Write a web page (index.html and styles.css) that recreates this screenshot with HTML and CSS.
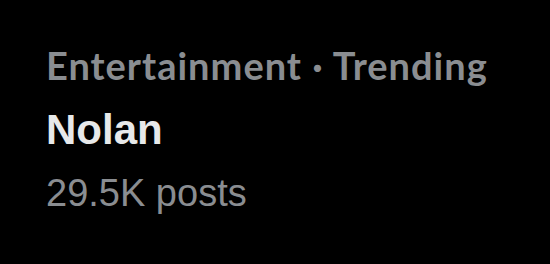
FILE: index.html
```html
<!DOCTYPE html>
<html>
<head>
	<title>Trend</title>
	<link rel="stylesheet" href="styles.css">
</head>
<body>
	<div class="trend">
		<div class="trend-meta">Entertainment · Trending</div>
		<div class="trend-name">Nolan</div>
		<div class="trend-count">29.5K posts</div>
	</div>
</body>
</html>
```

FILE: styles.css
```css
html, body {
	margin: 0;
	background-color: #000;
	height: 100%;
}

.trend {
	display: flex;
	flex-direction: column;
	padding: 43px 0 0 46px;
}

.trend-meta {
	font-family: Lato, "Liberation Sans", sans-serif;
	font-weight: 700;
	font-size: 38px;
	line-height: 44px;
	letter-spacing: 1px;
	color: #8a8d91;
}

.trend-name {
	font-family: "Liberation Sans", Arial, sans-serif;
	font-weight: 700;
	font-size: 42px;
	line-height: 50px;
	margin-top: 18px;
	color: #e7e9ea;
}

.trend-count {
	font-family: "Liberation Sans", Arial, sans-serif;
	font-size: 38px;
	line-height: 44px;
	margin-top: 16px;
	color: #8a8d91;
}
```
